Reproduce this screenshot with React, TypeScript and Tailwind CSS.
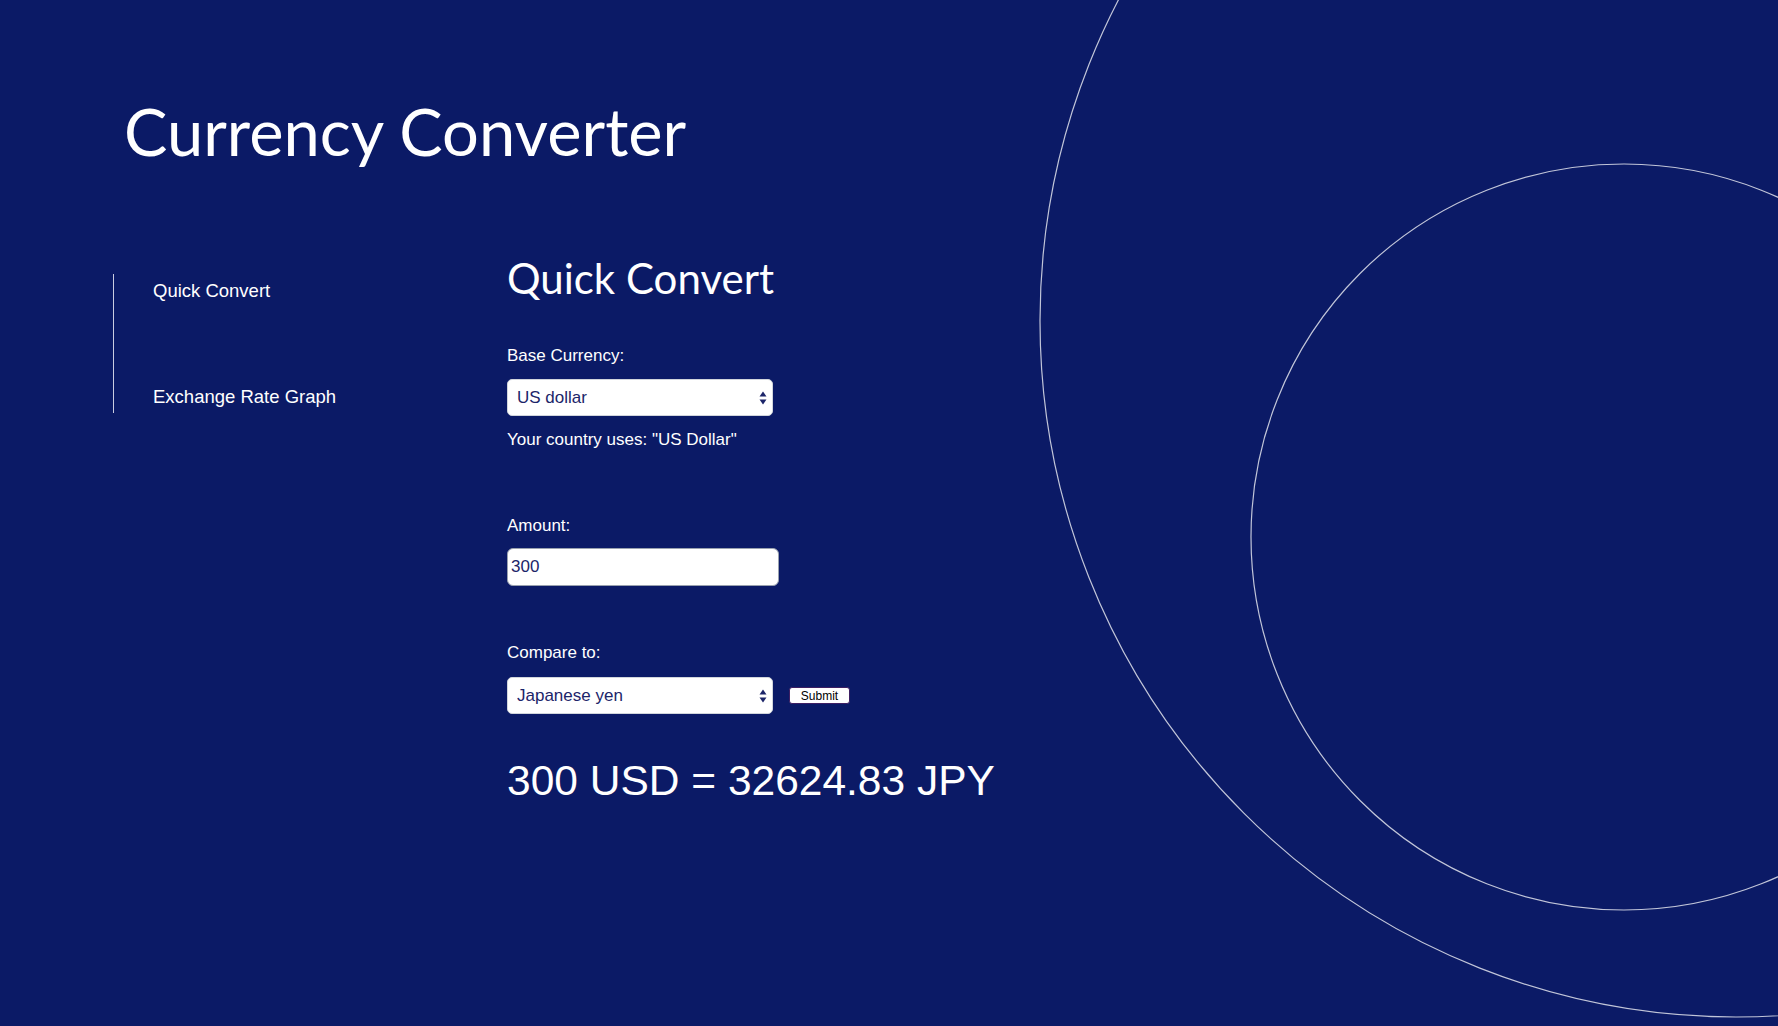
import React from "react";

const BG = "bg-[#0b1a66]";

const SelectArrows = () => (
  <svg width="8" height="15" viewBox="0 0 8 15" className="absolute right-[6px] top-1/2 -translate-y-1/2 pointer-events-none">
    <path d="M4 1 L7.5 6 L0.5 6 Z" fill="#1c2569" />
    <path d="M4 14 L7.5 9 L0.5 9 Z" fill="#1c2569" />
  </svg>
);

const Select = ({ value }: { value: string }) => (
  <div className="relative w-[266px]">
    <select
      defaultValue={value}
      className="appearance-none w-full h-[37px] bg-white rounded-[5px] border border-gray-300 pl-[9px] text-[17px] text-[#1c2569] outline-none"
      style={{ fontFamily: "'Liberation Sans', Arial, sans-serif" }}
    >
      <option>{value}</option>
    </select>
    <SelectArrows />
  </div>
);

export default function App() {
  return (
    <div
      className={`relative w-full h-[1026px] overflow-hidden ${BG} text-white`}
      style={{ fontFamily: "'Liberation Sans', Arial, sans-serif" }}
    >
      {/* decorative rings */}
      <svg className="absolute inset-0 pointer-events-none" width="1778" height="1026" viewBox="0 0 1778 1026">
        <circle cx="1736" cy="321" r="696" fill="none" stroke="rgba(255,255,255,0.75)" strokeWidth="1.2" />
        <circle cx="1624" cy="537" r="373" fill="none" stroke="rgba(255,255,255,0.75)" strokeWidth="1.2" />
      </svg>

      <div className="relative">
        <h1 className="pt-[99px] pl-[124px] text-[65px] leading-none font-normal" style={{ fontFamily: "Lato, sans-serif" }}>
          Currency Converter
        </h1>

        <div className="flex items-start pl-[113px] mt-[93px]">
          <nav className="w-[394px] mt-[17px]">
            <ul className="border-l border-[#c9cce0] pl-[39px] pt-[5px] pb-[4px] flex flex-col gap-[82px] text-[18.5px] leading-[24px]">
              <li>Quick Convert</li>
              <li>Exchange Rate Graph</li>
            </ul>
          </nav>

          <section className="flex flex-col items-start">
            <h2 className="text-[42px] leading-none" style={{ fontFamily: "Lato, sans-serif" }}>
              Quick Convert
            </h2>

            <label className="mt-[47px] text-[17px] leading-[20px]">Base Currency:</label>
            <div className="mt-[13px]">
              <Select value="US dollar" />
            </div>
            <p className="mt-[14px] text-[17px] leading-[20px]">Your country uses: "US Dollar"</p>

            <label className="mt-[66px] text-[17px] leading-[20px]">Amount:</label>
            <input
              defaultValue="300"
              className="mt-[12px] w-[272px] h-[38px] bg-white rounded-[6px] border border-gray-400 pl-[3px] text-[17px] text-[#1c2569] outline-none"
            />

            <label className="mt-[57px] text-[17px] leading-[20px]">Compare to:</label>
            <div className="mt-[14px] flex items-center">
              <Select value="Japanese yen" />
              <button className="ml-4 w-[61px] h-[17px] bg-white border border-[#3d1f63] rounded-[3px] text-[12px] leading-none text-black">
                Submit
              </button>
            </div>

            <p className="mt-[43px] text-[42.5px] leading-[48px]">300 USD = 32624.83 JPY</p>
          </section>
        </div>
      </div>
    </div>
  );
}
